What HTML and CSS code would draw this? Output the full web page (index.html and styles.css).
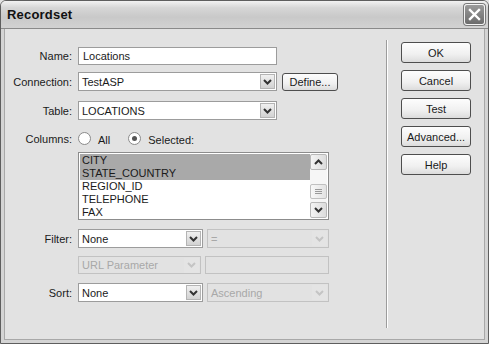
FILE: index.html
```html
<!DOCTYPE html>
<html>

<head>
  <title>Recordset</title>
  <link rel="stylesheet" href="styles.css">
</head>

<body>
  <div class="window">
    <div class="title-bar">
      <span class="title">Recordset</span>
      <div class="close-btn">
        <svg width="13" height="13" viewBox="0 0 13 13">
          <path d="M2 2 L11 11 M11 2 L2 11" stroke="#fff" stroke-width="2.4" stroke-linecap="square"/>
        </svg>
      </div>
    </div>

    <div class="content">
      <div class="form">
        <div class="row row-name">
          <label>Name:</label>
          <div class="input w-wide">Locations</div>
        </div>

        <div class="row row-conn">
          <label>Connection:</label>
          <div class="select w-wide">
            <span class="value">TestASP</span>
            <span class="drop"><svg width="9" height="6" viewBox="0 0 9 6"><path d="M1 1 L4.5 4.5 L8 1" fill="none" stroke="#333" stroke-width="2"/></svg></span>
          </div>
          <div class="btn btn-define">Define...</div>
        </div>

        <div class="row row-table">
          <label>Table:</label>
          <div class="select w-wide">
            <span class="value">LOCATIONS</span>
            <span class="drop"><svg width="9" height="6" viewBox="0 0 9 6"><path d="M1 1 L4.5 4.5 L8 1" fill="none" stroke="#333" stroke-width="2"/></svg></span>
          </div>
        </div>

        <div class="row row-cols">
          <label>Columns:</label>
          <div class="radios">
            <span class="radio"></span><span class="radio-text">All</span>
            <span class="radio checked"></span><span class="radio-text">Selected:</span>
          </div>
        </div>

        <div class="row row-list">
          <label></label>
          <div class="listbox">
            <div class="items">
              <div class="item selected">CITY</div>
              <div class="item selected">STATE_COUNTRY</div>
              <div class="item">REGION_ID</div>
              <div class="item">TELEPHONE</div>
              <div class="item">FAX</div>
            </div>
            <div class="scrollbar">
              <div class="sb-btn"><svg width="9" height="6" viewBox="0 0 9 6"><path d="M1 5 L4.5 1.5 L8 5" fill="none" stroke="#333" stroke-width="2"/></svg></div>
              <div class="sb-track">
                <div class="sb-thumb"><span></span><span></span><span></span></div>
              </div>
              <div class="sb-btn"><svg width="9" height="6" viewBox="0 0 9 6"><path d="M1 1 L4.5 4.5 L8 1" fill="none" stroke="#333" stroke-width="2"/></svg></div>
            </div>
          </div>
        </div>

        <div class="row row-filter">
          <label>Filter:</label>
          <div class="select w-half">
            <span class="value">None</span>
            <span class="drop"><svg width="9" height="6" viewBox="0 0 9 6"><path d="M1 1 L4.5 4.5 L8 1" fill="none" stroke="#333" stroke-width="2"/></svg></span>
          </div>
          <div class="select disabled w-rest">
            <span class="value">=</span>
            <span class="drop"><svg width="9" height="6" viewBox="0 0 9 6"><path d="M1 1 L4.5 4.5 L8 1" fill="none" stroke="#c4c4c4" stroke-width="2"/></svg></span>
          </div>
        </div>

        <div class="row row-param">
          <label></label>
          <div class="select disabled w-param">
            <span class="value">URL Parameter</span>
            <span class="drop"><svg width="9" height="6" viewBox="0 0 9 6"><path d="M1 1 L4.5 4.5 L8 1" fill="none" stroke="#c4c4c4" stroke-width="2"/></svg></span>
          </div>
          <div class="input disabled w-param2"></div>
        </div>

        <div class="row row-sort">
          <label>Sort:</label>
          <div class="select w-half">
            <span class="value">None</span>
            <span class="drop"><svg width="9" height="6" viewBox="0 0 9 6"><path d="M1 1 L4.5 4.5 L8 1" fill="none" stroke="#333" stroke-width="2"/></svg></span>
          </div>
          <div class="select disabled w-rest">
            <span class="value">Ascending</span>
            <span class="drop"><svg width="9" height="6" viewBox="0 0 9 6"><path d="M1 1 L4.5 4.5 L8 1" fill="none" stroke="#c4c4c4" stroke-width="2"/></svg></span>
          </div>
        </div>
      </div>

      <div class="separator"></div>

      <div class="actions">
        <div class="btn">OK</div>
        <div class="btn">Cancel</div>
        <div class="btn">Test</div>
        <div class="btn">Advanced...</div>
        <div class="btn">Help</div>
      </div>
    </div>
  </div>
</body>

</html>
```

FILE: styles.css
```css
body {
  margin: 0;
  font-family: "Liberation Sans", Arial, sans-serif;
  font-size: 11px;
  color: #1a1a1a;
  background-color: #e2e2e2;
}

.window {
  width: 489px;
  height: 344px;
  box-sizing: border-box;
  border: 1px solid #5e5e5e;
  border-radius: 6px 6px 0 0;
  background-color: #e2e2e2;
  display: flex;
  flex-direction: column;
  overflow: hidden;
}

.title-bar {
  height: 27px;
  flex: none;
  display: flex;
  align-items: center;
  justify-content: space-between;
  padding: 0 3px 0 6px;
  background: linear-gradient(to bottom, #f2f2f2 0%, #d6d6d6 25%, #c9c9c9 60%, #d2d2d2 100%);
  border-bottom: 1px solid #8a8a8a;
}

.title {
  font-size: 13px;
  font-weight: bold;
  color: #111;
  letter-spacing: 0.2px;
}

.close-btn {
  width: 19px;
  height: 19px;
  border: 1px solid #f4f4f4;
  border-radius: 3px;
  background: linear-gradient(to bottom, #9a9a9a, #6c6c6c);
  display: flex;
  align-items: center;
  justify-content: center;
  box-shadow: 0 0 0 1px #7a7a7a;
}

.content {
  flex: 1;
  display: flex;
  border-left: 3px solid #d4d4d4;
  border-right: 3px solid #d4d4d4;
  border-bottom: 3px solid #d4d4d4;
  box-shadow: inset 1px 0 #a8a8a8, inset -1px 0 #a8a8a8, inset 0 -1px #a8a8a8;
}

/* form column */
.form {
  width: 382px;
  padding-top: 18px;
}

.row {
  display: flex;
  align-items: center;
}

.row label {
  width: 68px;
  margin-right: 6px;
  text-align: right;
  flex: none;
}

.row-conn { margin-top: 7px; }
.row-table { margin-top: 10px; }
.row-cols { margin-top: 11px; }
.row-list { margin-top: 6px; }
.row-filter { margin-top: 9px; }
.row-param { margin-top: 8px; }
.row-sort { margin-top: 9px; }

.input,
.select {
  box-sizing: border-box;
  height: 19px;
  background-color: #fff;
  border: 1px solid #9c9c9c;
  display: flex;
  align-items: center;
}

.input {
  height: 18px;
  padding-left: 4px;
}

.select .value {
  flex: 1;
  padding-left: 3px;
}

.select .drop {
  width: 15px;
  height: 15px;
  margin-right: 1px;
  box-sizing: border-box;
  border: 1px solid #b4b4b4;
  background: linear-gradient(to bottom, #f0f0f0, #d2d2d2);
  display: flex;
  align-items: center;
  justify-content: center;
}

.disabled {
  background-color: #e2e2e2;
  border-color: #c2c2c2;
  color: #a8a8a8;
}

.disabled .drop {
  background: #e4e4e4;
  border-color: #e4e4e4;
}

.w-wide { width: 199px; }
.w-half { width: 125px; margin-right: 4px; }
.w-rest { width: 122px; }
.w-param { width: 123px; margin-right: 4px; height: 18px; }
.w-param2 { width: 124px; }

.btn {
  box-sizing: border-box;
  height: 21px;
  border: 1px solid #4e4e4e;
  border-radius: 3px;
  background: linear-gradient(to bottom, #fdfdfd 0%, #f0f0f0 60%, #dcdcdc 100%);
  display: flex;
  align-items: center;
  justify-content: center;
}

.btn-define {
  width: 56px;
  height: 18px;
  margin-left: 5px;
}

/* radios */
.radios {
  display: flex;
  align-items: center;
}

.radio {
  width: 11px;
  height: 11px;
  border: 1px solid #8a8a8a;
  border-radius: 50%;
  background: #fff;
  display: flex;
  align-items: center;
  justify-content: center;
}

.radio.checked::after {
  content: "";
  width: 5px;
  height: 5px;
  border-radius: 50%;
  background: #555;
}

.radio-text {
  margin-left: 7px;
  margin-right: 18px;
  padding-top: 3px;
}

/* listbox */
.listbox {
  box-sizing: border-box;
  width: 251px;
  height: 68px;
  border: 1px solid #8c8c8c;
  background-color: #fff;
  display: flex;
  padding: 1px;
}

.items {
  flex: 1;
}

.item {
  height: 13px;
  line-height: 13px;
  padding-left: 2px;
}

.item.selected {
  background-color: #a9a9a9;
}

.scrollbar {
  width: 17px;
  display: flex;
  flex-direction: column;
  background-color: #f6f6f6;
}

.sb-btn {
  height: 16px;
  box-sizing: border-box;
  border: 1px solid #b8b8b8;
  border-radius: 2px;
  background: linear-gradient(to right, #f4f4f4, #dcdcdc);
  display: flex;
  align-items: center;
  justify-content: center;
}

.sb-track {
  flex: 1;
  display: flex;
  flex-direction: column;
  justify-content: flex-end;
  padding-bottom: 3px;
}

.sb-thumb {
  height: 15px;
  box-sizing: border-box;
  border: 1px solid #c0c0c0;
  border-radius: 2px;
  background: linear-gradient(to right, #f8f8f8, #e2e2e2);
  display: flex;
  flex-direction: column;
  align-items: center;
  justify-content: center;
  gap: 1px;
}

.sb-thumb span {
  width: 7px;
  height: 1px;
  background: #9a9a9a;
}

/* separator and buttons */
.separator {
  width: 1px;
  margin: 11px 0 12px 0;
  background-color: #9c9c9c;
  border-right: 1px solid #fff;
}

.actions {
  padding: 13px 0 0 13px;
  display: flex;
  flex-direction: column;
  gap: 7px;
}

.actions .btn {
  width: 70px;
}
```
